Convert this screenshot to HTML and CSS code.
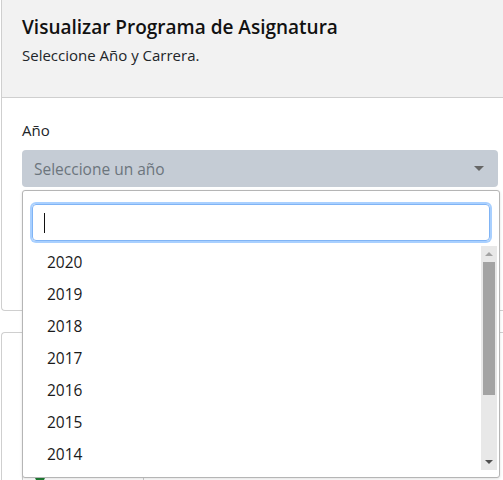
FILE: index.html
```html
<!DOCTYPE html>
<html lang="es">
<head>
<meta charset="utf-8">
<title>Visualizar Programa de Asignatura</title>
<link rel="stylesheet" href="styles.css">
</head>
<body>
<div class="page">
  <div class="card card-first">
    <div class="card-header">
      <h5 class="title">Visualizar Programa de Asignatura</h5>
      <p class="subtitle">Seleccione Año y Carrera.</p>
    </div>
    <div class="card-body">
      <div class="field">
        <label class="label">Año</label>
        <div class="select-wrap">
          <div class="select">
            <span class="placeholder">Seleccione un año</span>
            <span class="caret"></span>
          </div>
          <div class="dropdown">
            <div class="search-wrap">
              <div class="search"><span class="cursor"></span></div>
            </div>
            <div class="results">
              <ul class="options">
                <li class="option">2020</li>
                <li class="option">2019</li>
                <li class="option">2018</li>
                <li class="option">2017</li>
                <li class="option">2016</li>
                <li class="option">2015</li>
                <li class="option">2014</li>
              </ul>
              <div class="scrollbar">
                <span class="arrow arrow-up"></span>
                <div class="track"><div class="thumb"></div></div>
                <span class="arrow arrow-down"></span>
              </div>
            </div>
          </div>
        </div>
      </div>
      <div class="hidden-row"><span class="tag tag-orange"></span></div>
    </div>
  </div>
  <div class="card card-second">
    <div class="card-body second-body">
      <div class="mark mark-red"></div>
      <div class="mark mark-orange"></div>
      <div class="mark mark-yellow"></div>
      <div class="box"><span class="dot"></span></div>
    </div>
  </div>
</div>
</body>
</html>
```
FILE: styles.css
```css
html, body {
  margin: 0;
  padding: 0;
  background: #fff;
  overflow: hidden;
}
body {
  font-family: "Segoe UI", "Open Sans", "Noto Sans", sans-serif;
  color: #212529;
  font-size: 16px;
  width: 503px;
  height: 480px;
}
.page {
  padding-left: 1px;
  width: 502px;
  height: 480px;
  overflow: hidden;
}
.card {
  border: 1px solid #cfcfcf;
  border-right: none;
  border-radius: 4px 0 0 4px;
  background: #fff;
}
.card-first {
  border-top: none;
  border-top-left-radius: 0;
}
.card-header {
  background: #f2f2f2;
  border-bottom: 1px solid #cfcfcf;
  padding: 15px 20px 0;
  height: 82px;
}
.title {
  margin: 0;
  font-size: 19px;
  font-weight: 600;
  line-height: 24px;
  color: #111;
}
.subtitle {
  margin: 6px 0 0;
  font-size: 15px;
  line-height: 20px;
}
.card-body {
  padding: 20px 20px 0;
  height: 192px;
}
.field {
  width: 476px;
}
.label {
  display: block;
  font-size: 15px;
  line-height: 24px;
  margin-bottom: 8px;
}
.select-wrap {
  position: relative;
}
.select {
  height: 37px;
  border-radius: 4px;
  background: #c5ccd5;
  display: flex;
  align-items: center;
  justify-content: space-between;
  padding: 0 12px;
  box-sizing: border-box;
}
.placeholder {
  color: #6c757d;
  font-size: 15.5px;
}
.caret {
  width: 0;
  height: 0;
  border-left: 5px solid transparent;
  border-right: 5px solid transparent;
  border-top: 5px solid #666;
  margin-right: 2px;
}
.dropdown {
  position: absolute;
  left: 0;
  top: 40px;
  width: 478px;
  height: 288px;
  box-sizing: border-box;
  background: #fff;
  border: 1px solid #b5b5b5;
  border-radius: 3px;
  box-shadow: 0 1px 3px rgba(0,0,0,0.12);
  z-index: 10;
}
.search-wrap {
  padding: 13px 9px 5px;
}
.search {
  height: 35px;
  border: 1px solid #80b4f5;
  border-radius: 4px;
  box-shadow: 0 0 0 2px #a9d0ff;
  display: flex;
  align-items: center;
  padding-left: 11px;
}
.cursor {
  width: 1px;
  height: 20px;
  background: #111;
}
.results {
  display: flex;
  height: 224px;
}
.options {
  list-style: none;
  margin: 0;
  padding: 0;
  flex: 1;
}
.option {
  height: 32px;
  line-height: 32px;
  padding-left: 24px;
  font-size: 15.5px;
  color: #1a1a1a;
}
.scrollbar {
  width: 16px;
  margin-right: 2px;
  background: #e8e8e8;
  display: flex;
  flex-direction: column;
  align-items: center;
}
.track {
  flex: 1;
  width: 100%;
  padding: 0 2px;
  box-sizing: border-box;
}
.thumb {
  height: 133px;
  background: #a3a3a3;
}
.arrow {
  width: 0;
  height: 0;
  margin: 6px 0;
  border-left: 4px solid transparent;
  border-right: 4px solid transparent;
}
.arrow-up {
  border-bottom: 4px solid #a3a3a3;
}
.arrow-down {
  border-top: 4px solid #505050;
}
.hidden-row {
  padding-top: 14px;
}
.tag {
  display: block;
  width: 60px;
  height: 12px;
  border-radius: 3px;
}
.tag-orange {
  background: #d07a1f;
}
.card-second {
  margin-top: 21px;
}
.second-body {
  padding-top: 24px;
  height: 200px;
}
.mark {
  width: 60px;
  height: 6px;
}
.mark-red {
  background: #7a1a10;
  margin-bottom: 34px;
}
.mark-orange {
  background: #c85a20;
  margin-bottom: 14px;
}
.mark-yellow {
  background: #e0a42a;
  height: 16px;
  margin-bottom: 16px;
}
.box {
  width: 120px;
  height: 40px;
  border: 1px solid #ccc;
  border-radius: 3px;
  position: relative;
}
.dot {
  position: absolute;
  left: 12px;
  top: 22px;
  width: 10px;
  height: 10px;
  border-radius: 50%;
  background: #1e7e34;
}
```
